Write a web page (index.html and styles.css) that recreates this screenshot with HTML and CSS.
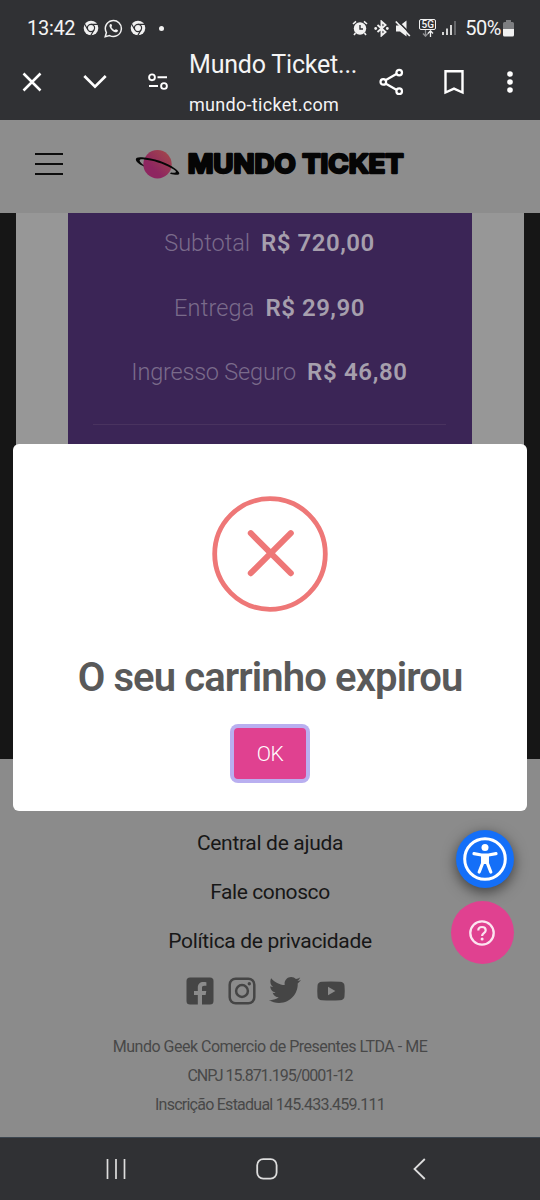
FILE: index.html
```html
<!DOCTYPE html>
<html lang="pt-BR">
<head>
<meta charset="utf-8">
<meta name="viewport" content="width=device-width, initial-scale=1">
<title>Mundo Ticket</title>
<link rel="stylesheet" href="styles.css">
</head>
<body>
<div class="phone">
  <header class="chrome">
    <div class="status">
      <span class="clock">13:42</span>
      <svg class="s-chrome" width="16" height="16" viewBox="0 0 16 16"><circle cx="8" cy="8" r="7.3" fill="#f1f1f1"/><g stroke="#303134" stroke-width="1.2" fill="none"><circle cx="8" cy="8" r="3.6"/><path d="M8 4.4h7M4.9 9.8L1.4 3.8M11.1 9.8L7.6 15.8"/></g></svg>
      <svg class="s-wa" width="19" height="19" viewBox="0 0 19 19"><path d="M1.2 17.8l1.2-4.3A8 8 0 1 1 5.600 16.600z" fill="none" stroke="#f1f1f1" stroke-width="1.500"/><path d="M6.500 5c-1 .6-1.300 1.700-.8 2.900 1 2.500 2.900 4.400 5.400 5.300 1.200.4 2.400-.1 2.800-1.200.1-.3.100-.7-.2-.9l-1.700-.9c-.8-.2-.9 1-1.500.9-1.300-.5-2.500-1.700-3.100-3 .1-.5.900-.7.600-1.500l-.7-1.600z" fill="#f1f1f1"/></svg>
      <svg class="s-chrome2" width="16" height="16" viewBox="0 0 16 16"><circle cx="8" cy="8" r="7.300" fill="#f1f1f1"/><g stroke="#303134" stroke-width="1.200" fill="none"><circle cx="8" cy="8" r="3.600"/><path d="M8 4.400h7M4.900 9.800L1.400 3.800M11.100 9.800L7.600 15.800"/></g></svg>
      <span class="dot"></span>
      <div class="status-right">
        <svg width="16" height="16" viewBox="0 0 16 16"><circle cx="8" cy="8.500" r="6.200" fill="#f1f1f1"/><path d="M1 4l3-2.700M15 4l-3-2.700M3.500 13l-1.500 2M12.500 13l1.500 2" stroke="#f1f1f1" stroke-width="1.600"/><path d="M8 5v4h3" fill="none" stroke="#303134" stroke-width="1.400"/></svg>
        <svg width="15" height="17" viewBox="0 0 15 17"><path d="M3.500 5l8 7-4 3.500v-14l4 3.500-8 7" fill="none" stroke="#f1f1f1" stroke-width="1.900"/><circle cx="1.700" cy="8.500" r="1.400" fill="#f1f1f1"/><circle cx="13.300" cy="8.500" r="1.400" fill="#f1f1f1"/></svg>
        <svg width="16" height="17" viewBox="0 0 16 17"><path d="M1 5.500h4l6.500-5v16l-6.500-5H1z" fill="#f1f1f1"/><path d="M2 .5l14 14" stroke="#303134" stroke-width="1.600"/><path d="M.8 1.500l14 14.500" stroke="#f1f1f1" stroke-width="1.700"/></svg>
        <span class="net"><span class="fiveg">5G</span><svg width="12" height="7" viewBox="0 0 12 7"><path d="M3.500 0v6M1 3.500l2.500 2.700L6 3.500" fill="none" stroke="#909194" stroke-width="1.300"/><path d="M8.500 7V1M6 3.500L8.500.8 11 3.500" fill="none" stroke="#f1f1f1" stroke-width="1.300"/></svg></span>
        <svg class="bars" width="15" height="16" viewBox="0 0 15 16"><path d="M1 12v3M5 8.500V15M9 5v10" stroke="#f1f1f1" stroke-width="1.700"/><path d="M13 1v14" stroke="#707174" stroke-width="1.700"/></svg>
        <span class="pct">50%</span>
        <svg width="11" height="17" viewBox="0 0 11 17"><path d="M3 0h5v2h1.500Q11 2 11 3.500V9H0V3.500Q0 2 1.500 2H3z" fill="#7d7e81"/><path d="M0 9h11v6q0 1.500-1.500 1.500h-8Q0 16.500 0 15z" fill="#f1f1f1"/></svg>
      </div>
    </div>
    <div class="toolbar">
      <svg class="t-close" width="20" height="20" viewBox="0 0 20 20"><path d="M1.500 1.500l17 17M18.500 1.500l-17 17" stroke="#fff" stroke-width="2.500"/></svg>
      <svg class="t-down" width="24" height="16" viewBox="0 0 24 16"><path d="M1.300 2L12 12.700 22.700 2" fill="none" stroke="#fff" stroke-width="2.700"/></svg>
      <svg class="t-tune" width="20" height="18" viewBox="0 0 20 18"><g fill="none" stroke="#fff" stroke-width="1.900"><circle cx="4" cy="4.300" r="2.900"/><path d="M9.500 4.300H19M1 13H10"/><circle cx="16" cy="13" r="2.900"/></g></svg>
      <div class="page-info"><span class="page-title">Mundo Ticket...</span><span class="page-url">mundo-ticket.com</span></div>
      <svg class="t-share" width="26" height="28" viewBox="0 0 26 28"><g fill="none" stroke="#fff" stroke-width="2.200"><path d="M6.500 12.200l11.300-6.500M6.500 15.500l11.300 6.500"/><circle cx="4.300" cy="13.900" r="2.800"/><circle cx="20.200" cy="4.600" r="2.800"/><circle cx="20.200" cy="23.200" r="2.800"/></g></svg>
      <svg class="t-book" width="20" height="26" viewBox="0 0 20 26"><path d="M1.500 2.200h17v21.300L10 19.600 1.500 23.500z" fill="none" stroke="#fff" stroke-width="2.400"/></svg>
      <svg class="t-more" width="6" height="24" viewBox="0 0 6 24"><g fill="#fff"><circle cx="3" cy="4" r="2.800"/><circle cx="3" cy="12" r="2.800"/><circle cx="3" cy="20" r="2.800"/></g></svg>
    </div>
  </header>

  <div class="site-header">
    <svg width="28" height="24" viewBox="0 0 28 24"><path d="M0 2h28M0 12h28M0 22h28" stroke="#0d0d0d" stroke-width="2"/></svg>
    <svg class="logo" width="274" height="40" viewBox="0 0 274 40">
      <defs><linearGradient id="planet" x1="1" y1="0" x2=".35" y2=".65"><stop offset="0" stop-color="#a54b48"/><stop offset="1" stop-color="#8e2660"/></linearGradient></defs>
      <circle cx="22.500" cy="20.300" r="14.200" fill="url(#planet)"/>
      <path d="M9.200 15.500C3.500 14.600 3 17 8.300 21L9 22.500C-1 18 -2 12.500 7 13.300 18 14 32 18.500 40 24.500 48 30.500 44 32.200 35 29.700L36 28.500C43 29.500 42 26.800 36.500 24.200 28 19.500 18 16.300 9.200 15.500z" fill="#070707"/>
      <text class="logo-text" x="52.700" y="29" textLength="216" lengthAdjust="spacingAndGlyphs">MUNDO TICKET</text>
    </svg>
  </div>

  <main class="checkout">
    <div class="sheet">
      <section class="summary">
        <div class="row"><span class="label l1">Subtotal</span><b class="v1">R$ 720,00</b></div>
        <div class="row"><span class="label l2">Entrega</span><b class="v2">R$ 29,90</b></div>
        <div class="row"><span class="label l3">Ingresso Seguro</span><b class="v3">R$ 46,80</b></div>
        <hr class="rule">
      </section>
    </div>
  </main>

  <footer class="footer">
    <a class="link k1">Central de ajuda</a>
    <a class="link k2">Fale conosco</a>
    <a class="link k3">Política de privacidade</a>
    <div class="social">
      <svg width="28" height="28" viewBox="0 0 28 28"><rect x=".5" y=".5" width="27" height="27" rx="3.500" fill="#454545"/><path d="M11.800 28V18H8v-4h3.800v-3.300c0-3.900 2.200-5.700 5.600-5.700 1.400 0 2.600.1 3 .2v3.500h-2c-1.900 0-2.400.9-2.400 2.300v3h4.300l-.7 4H16v10z" fill="#8b8b8b"/></svg>
      <svg width="28" height="28" viewBox="0 0 28 28" fill="none" stroke="#454545"><rect x="1.700" y="1.700" width="24.600" height="24.600" rx="6" stroke-width="2.500"/><circle cx="14" cy="14" r="5.900" stroke-width="2.500"/><circle cx="21.300" cy="6.800" r="1.700" fill="#454545" stroke="none"/></svg>
      <svg class="bird" width="32" height="28" viewBox="0 0 512 448"><path transform="translate(0 -48)" fill="#454545" d="M459.370 151.716c.325 4.548.325 9.097.325 13.645 0 138.720-105.583 298.558-298.558 298.558-59.452 0-114.680-17.219-161.137-47.106 8.447.974 16.568 1.299 25.340 1.299 49.055 0 94.213-16.568 130.274-44.832-46.132-.975-84.792-31.188-98.112-72.772 6.498.974 12.995 1.624 19.818 1.624 9.421 0 18.843-1.300 27.614-3.573-48.081-9.747-84.143-51.980-84.143-102.985v-1.299c13.969 7.797 30.214 12.670 47.431 13.319-28.264-18.843-46.781-51.005-46.781-87.391 0-19.492 5.197-37.360 14.294-52.954 51.655 63.675 129.300 105.258 216.365 109.807-1.624-7.797-2.599-15.918-2.599-24.040 0-57.828 46.782-104.934 104.934-104.934 30.213 0 57.502 12.670 76.670 33.137 23.715-4.548 46.456-13.320 66.599-25.340-7.798 24.366-24.366 44.833-46.132 57.827 21.117-2.273 41.584-8.122 60.426-16.243-14.292 20.791-32.161 39.308-52.628 54.253z"/></svg>
      <svg width="28" height="20" viewBox="0 0 28 20"><path d="M5 .8Q14 .1 23 .8q4.300.3 4.500 4Q28 10 27.500 15.200q-.2 3.700-4.500 4-9 .7-18 0-4.300-.3-4.500-4Q0 10 .5 4.800.7 1.100 5 .8z" fill="#454545"/><path d="M11 5.800l7.400 4.200-7.400 4.200z" fill="#8b8b8b"/></svg>
    </div>
    <p class="legal g1">Mundo Geek Comercio de Presentes LTDA - ME</p>
    <p class="legal g2">CNPJ 15.871.195/0001-12</p>
    <p class="legal g3">Inscrição Estadual 145.433.459.111</p>
  </footer>

  <nav class="nav">
    <svg width="20" height="22" viewBox="0 0 20 22"><path d="M1.500 1v20M10 1v20M18.500 1v20" stroke="#ddd" stroke-width="1.700"/></svg>
    <svg class="home" width="22" height="22" viewBox="0 0 22 22"><rect x="1.200" y="1.200" width="19.400" height="19.400" rx="6" fill="none" stroke="#ddd" stroke-width="1.800"/></svg>
    <svg width="13" height="22" viewBox="0 0 13 22"><path d="M11.800 1L1.500 11l10.300 10" fill="none" stroke="#ddd" stroke-width="1.800"/></svg>
  </nav>

  <div class="modal" role="dialog">
    <svg width="116" height="116" viewBox="0 0 116 116"><g fill="none" stroke="#ee7777"><circle cx="58" cy="58" r="55.300" stroke-width="4.800"/><path d="M38.800 37.200l40 40M78.800 37.200l-40 40" stroke-width="6" stroke-linecap="round"/></g></svg>
    <h1 class="modal-title">O seu carrinho expirou</h1>
    <button class="ok">OK</button>
  </div>

  <div class="floats">
    <div class="access"><svg width="44" height="44" viewBox="0 0 44 44"><circle cx="22" cy="22" r="20.300" fill="none" stroke="#fff" stroke-width="3"/><circle cx="22" cy="10.500" r="3.500" fill="#fff"/><path d="M11 16.700l7.500 1.300h7L33 16.700M19.700 19v7l-3.500 9M24.300 19v7l3.500 9" fill="none" stroke="#fff" stroke-width="3.200" stroke-linecap="round" stroke-linejoin="round"/><path d="M18.200 17h7.600v10h-7.600z" fill="#fff"/></svg></div>
    <div class="help"><svg width="28" height="28" viewBox="0 0 28 28"><g fill="none" stroke="#fce4f0"><circle cx="14" cy="14" r="11.700" stroke-width="2.300"/><path d="M10.300 11.500c0-2.100 1.600-3.500 3.700-3.500s3.700 1.400 3.700 3.300c0 2.800-3.600 2.900-3.600 5.600" stroke-width="2.200"/></g><circle cx="14.100" cy="20" r="1.500" fill="#fce4f0"/></svg></div>
  </div>
</div>
</body>
</html>
```
FILE: styles.css
```css
* { box-sizing: border-box; }
body { margin: 0; font-family: Roboto, sans-serif; }
svg { display: block; flex: none; }
.phone { position: relative; width: 540px; height: 1200px; overflow: hidden; display: flex; flex-direction: column; }
.phone > * { flex: none; }

.chrome { height: 120px; background: #303134; color: #f4f4f4; }
.status { height: 56px; padding-left: 27px; display: flex; align-items: center; }
.clock { width: 56px; font-size: 20px; letter-spacing: -0.3px; }
.s-wa { margin-left: 5px; }
.s-chrome2 { margin-left: 7px; }
.dot { width: 5px; height: 5px; margin-left: 13px; border-radius: 50%; background: #f1f1f1; }
.status-right { margin-left: auto; padding-right: 26px; display: flex; align-items: center; gap: 6px; }
.net { display: flex; flex-direction: column; align-items: center; margin-left: 2px; }
.fiveg { width: 17px; height: 11px; border: 1px solid #f1f1f1; border-radius: 2px; font-size: 10px; line-height: 9px; font-weight: 500; text-align: center; }
.pct { margin-left: 2px; margin-right: -4px; font-size: 20px; letter-spacing: -0.5px; }
.toolbar { height: 64px; display: flex; align-items: flex-start; }
.t-close { margin: 16px 0 0 22px; }
.t-down { margin: 18px 0 0 41px; }
.t-tune { margin: 17px 0 0 41px; }
.page-info { width: 172px; margin: -7px 0 0 21px; display: flex; flex-direction: column; white-space: nowrap; }
.page-title { font-size: 25px; line-height: 32px; letter-spacing: -0.2px; }
.page-url { margin-top: 13px; font-size: 18px; line-height: 22px; letter-spacing: 0.3px; }
.t-share { margin: 12px 0 0 18px; }
.t-book { margin: 13px 0 0 39px; }
.t-more { margin: 14px 0 0 43px; }

.site-header { height: 93px; padding: 0 135px 5px 35px; display: flex; align-items: center; justify-content: space-between; background: #8d8d8d; }
.site-header .logo { margin-right: -4px; }
.logo-text { font: 700 25.5px Inter, sans-serif; fill: #050505; stroke: #050505; stroke-width: 2.4px; stroke-linejoin: round; }

.checkout { height: 546px; padding: 0 16px; background: #161616; }
.sheet { height: 100%; padding: 0 52px; background: #979797; }
.summary { height: 100%; padding: 0 26px 0 25px; display: flex; flex-direction: column; background: #3b2556; }
.row { height: 60px; margin-bottom: 4.5px; display: flex; align-items: center; justify-content: center; gap: 11px; font-size: 23.5px; white-space: nowrap; }
.label { color: #7a6b8b; font-weight: 300; }
.l2 { letter-spacing: 0.15px; }
.l3 { letter-spacing: -0.2px; }
.row b { color: #a69fad; font-weight: 600; font-size: 24px; letter-spacing: 0.5px; }
.row .v3 { letter-spacing: 0.65px; }
.rule { width: 100%; height: 1px; margin: 17px 0 0; border: 0; background: #49335f; }

.footer { height: 378px; padding-top: 59px; display: flex; flex-direction: column; align-items: center; background: #8b8b8b; }
.link { height: 49px; line-height: 50px; font-size: 21px; letter-spacing: -0.32px; color: #171717; white-space: nowrap; }
.k2 { letter-spacing: -0.42px; }
.social { height: 28px; margin: 11.5px 10px 27px 0; display: flex; align-items: center; gap: 14px; }
.bird { margin-left: -1px; margin-right: 2px; }
.legal { height: 29px; margin: 0; line-height: 29px; font-size: 16px; letter-spacing: -0.5px; color: #484848; white-space: nowrap; }
.g2 { letter-spacing: -1.02px; }
.g3 { letter-spacing: -0.75px; }

.nav { height: 63px; padding: 0 114px 0 106px; display: flex; align-items: center; justify-content: space-between; border-top: 1px solid #3c4650; background: #303134; }
.home { margin-right: 5px; }

.modal { position: absolute; left: 13px; top: 444px; width: 514px; height: 367px; padding-top: 52px; display: flex; flex-direction: column; align-items: center; border-radius: 6px; background: #fff; }
.modal-title { height: 50px; margin: 40px 0 0; font-size: 40px; line-height: 51px; font-weight: 600; letter-spacing: -0.88px; color: #595959; white-space: nowrap; }
.ok { width: 72px; height: 51px; margin-top: 26px; padding: 0; border: 0; border-radius: 4px; background: #e04190; box-shadow: 0 0 0 4px #b9aff0; font: 300 21px Roboto, sans-serif; letter-spacing: -0.5px; color: #fff; }

.floats { position: absolute; left: 450px; top: 830px; width: 64px; display: flex; flex-direction: column; align-items: center; gap: 13px; }
.access { width: 58px; height: 58px; margin-left: 6px; border-radius: 50%; display: grid; place-items: center; background: #146ff8; box-shadow: 0 4px 14px rgba(0, 0, 0, .55); }
.help { width: 63px; height: 63px; border-radius: 50%; display: grid; place-items: center; background: #e04190; }
```
